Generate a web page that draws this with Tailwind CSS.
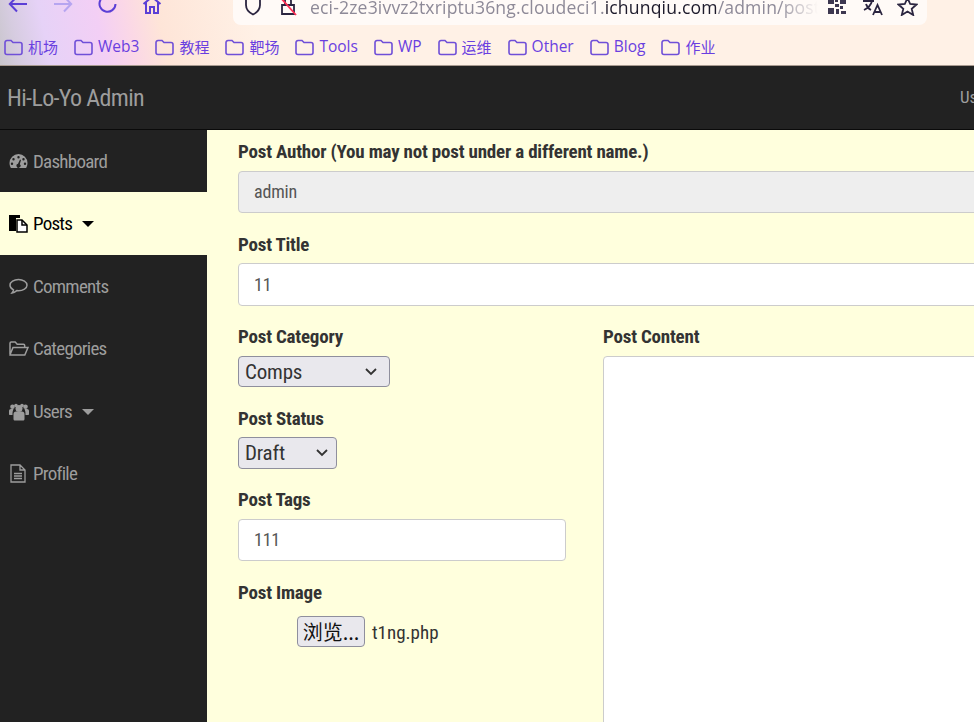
<!DOCTYPE html>
<html lang="zh-CN">
<head>
<meta charset="UTF-8">
<title>Hi-Lo-Yo Admin</title>
<script src="https://cdn.jsdelivr.net/npm/@tailwindcss/browser@4"></script>
</head>
<body class="w-[974px] h-[722px] overflow-hidden bg-[#222222] font-['Roboto','Noto_Sans_CJK_SC',sans-serif]">

<!-- browser chrome -->
<div class="relative h-[66px] bg-[linear-gradient(78deg,#c9c6cc_0px,#d6cce0_20px,#e6d2f7_50px,#f3cff5_105px,#fbd8e6_135px,#fee5d8_165px,#fff1e6_260px)] border-b border-[#a89a90] overflow-hidden">
  <div class="h-[25px] flex items-start">
    <div class="w-[233px] h-[25px] pl-[8px] flex items-start gap-[25px] text-[#5b3fd6]">
      <svg class="mt-[-7px]" width="21" height="22" viewBox="0 0 21 22" fill="none" stroke="#5b3fd6" stroke-width="2"><path d="M19 11H2M9 3.500 1.800 11 9 18.500"/></svg>
      <svg class="mt-[-7px] ml-[-2px]" width="21" height="22" viewBox="0 0 21 22" fill="none" stroke="#b6a5f0" stroke-width="2"><path d="M2 11h17M12 3.500 19.200 11 12 18.500"/></svg>
      <svg class="mt-[-7px]" width="20" height="22" viewBox="0 0 20 22" fill="none" stroke="#5b3fd6" stroke-width="2"><path d="M17.500 11a8 8 0 1 1-3-6.500"/><path d="M17 1v5h-5" fill="#5b3fd6"/></svg>
      <svg class="mt-[-6px] ml-[-1px]" width="20" height="22" viewBox="0 0 20 22" fill="none" stroke="#5b3fd6" stroke-width="2"><path d="M1.500 10 10 3l8.500 7M4 8v11h4v-6h4v6h4V8"/></svg>
    </div>
    <div class="w-[694px] h-[25px] bg-[#fffaf7] rounded-b-lg flex items-start relative">
      <svg class="ml-[10px] mt-[-6px]" width="20" height="22" viewBox="0 0 20 22" fill="none" stroke="#2b2540" stroke-width="1.800"><path d="M10 2 3 4.500V11c0 4.500 3 7.500 7 9.500 4-2 7-5 7-9.500V4.500z"/></svg>
      <svg class="ml-[16px] mt-[-6px]" width="18" height="22" viewBox="0 0 18 22" fill="none"><path d="M3 11h12v9H3z" stroke="#2b2540" stroke-width="1.800"/><path d="M6 11V7a3 3 0 0 1 6 0v4" stroke="#2b2540" stroke-width="1.800"/><path d="M1 3l16 18" stroke="#ff2d55" stroke-width="1.800"/></svg>
      <div class="ml-[13px] mt-[-5px] w-[508px] overflow-hidden whitespace-nowrap text-[17.600px] leading-[24px] text-[#8e8a98] font-['Open_Sans',sans-serif] tracking-[0.150px] [mask-image:linear-gradient(to_right,black_92%,transparent)]">eci-2ze3ivvz2txriptu36ng.cloudeci1.<span class="text-[#1d1a2b]">ichunqiu.com</span>/admin/post</div>
      <svg class="absolute left-[595px] top-[-1px]" width="18" height="15" viewBox="0 0 18 15"><path fill="#3d3750" d="M0 0h6v5H0zM12 0h6v5h-6zM0 9h6v6H0zM7 0h3v3H7zM7 5h4v3H7zM12 7h3v3h-3zM8 10h3v5H8zM13 12h5v3h-5z"/></svg>
      <svg class="absolute left-[629px] top-[-2px]" width="22" height="18" viewBox="0 0 22 18" fill="none" stroke="#2b2540" stroke-width="1.800"><path d="M1 3h11M6 1v2M10 3c-1 4-4 7-8 9M4 6c1 3 3 5 5 6M11 17l4.500-10L20 17M12.500 14h6"/></svg>
      <svg class="absolute left-[664px] top-[-3px]" width="21" height="19" viewBox="0 0 21 19" fill="none" stroke="#2b2540" stroke-width="1.800"><path d="M10.500 1l2.700 6 6.300.5-4.800 4.200 1.500 6.300-5.700-3.400-5.700 3.400 1.500-6.300L1.500 7.500 7.800 7z"/></svg>
    </div>
  </div>
  <div class="h-[40px] pl-[4px] flex items-center gap-[16px] text-[15px] text-[#6a3fe0] font-['Open_Sans','Noto_Sans_CJK_SC',sans-serif] pt-[4px]">
    <span class="flex items-center gap-[5px]"><svg class="text-[#6f4fd8]" width="19" height="17" viewBox="0 0 19 17" fill="none" stroke="currentColor" stroke-width="1.600"><path d="M1 3.500a2 2 0 0 1 2-2h4l2 2h7a2 2 0 0 1 2 2v8a2 2 0 0 1-2 2H3a2 2 0 0 1-2-2z"/></svg>机场</span>
    <span class="flex items-center gap-[5px] text-[15.500px]"><svg class="text-[#6f4fd8]" width="19" height="17" viewBox="0 0 19 17" fill="none" stroke="currentColor" stroke-width="1.600"><path d="M1 3.500a2 2 0 0 1 2-2h4l2 2h7a2 2 0 0 1 2 2v8a2 2 0 0 1-2 2H3a2 2 0 0 1-2-2z"/></svg>Web3</span>
    <span class="flex items-center gap-[5px]"><svg class="text-[#6f4fd8]" width="19" height="17" viewBox="0 0 19 17" fill="none" stroke="currentColor" stroke-width="1.600"><path d="M1 3.500a2 2 0 0 1 2-2h4l2 2h7a2 2 0 0 1 2 2v8a2 2 0 0 1-2 2H3a2 2 0 0 1-2-2z"/></svg>教程</span>
    <span class="flex items-center gap-[5px]"><svg class="text-[#6f4fd8]" width="19" height="17" viewBox="0 0 19 17" fill="none" stroke="currentColor" stroke-width="1.600"><path d="M1 3.500a2 2 0 0 1 2-2h4l2 2h7a2 2 0 0 1 2 2v8a2 2 0 0 1-2 2H3a2 2 0 0 1-2-2z"/></svg>靶场</span>
    <span class="flex items-center gap-[5px] text-[15.500px]"><svg class="text-[#6f4fd8]" width="19" height="17" viewBox="0 0 19 17" fill="none" stroke="currentColor" stroke-width="1.600"><path d="M1 3.500a2 2 0 0 1 2-2h4l2 2h7a2 2 0 0 1 2 2v8a2 2 0 0 1-2 2H3a2 2 0 0 1-2-2z"/></svg>Tools</span>
    <span class="flex items-center gap-[5px] text-[15.500px]"><svg class="text-[#6f4fd8]" width="19" height="17" viewBox="0 0 19 17" fill="none" stroke="currentColor" stroke-width="1.600"><path d="M1 3.500a2 2 0 0 1 2-2h4l2 2h7a2 2 0 0 1 2 2v8a2 2 0 0 1-2 2H3a2 2 0 0 1-2-2z"/></svg>WP</span>
    <span class="flex items-center gap-[5px]"><svg class="text-[#6f4fd8]" width="19" height="17" viewBox="0 0 19 17" fill="none" stroke="currentColor" stroke-width="1.600"><path d="M1 3.500a2 2 0 0 1 2-2h4l2 2h7a2 2 0 0 1 2 2v8a2 2 0 0 1-2 2H3a2 2 0 0 1-2-2z"/></svg>运维</span>
    <span class="flex items-center gap-[5px] text-[15.500px]"><svg class="text-[#6f4fd8]" width="19" height="17" viewBox="0 0 19 17" fill="none" stroke="currentColor" stroke-width="1.600"><path d="M1 3.500a2 2 0 0 1 2-2h4l2 2h7a2 2 0 0 1 2 2v8a2 2 0 0 1-2 2H3a2 2 0 0 1-2-2z"/></svg>Other</span>
    <span class="flex items-center gap-[5px] text-[15.500px]"><svg class="text-[#6f4fd8]" width="19" height="17" viewBox="0 0 19 17" fill="none" stroke="currentColor" stroke-width="1.600"><path d="M1 3.500a2 2 0 0 1 2-2h4l2 2h7a2 2 0 0 1 2 2v8a2 2 0 0 1-2 2H3a2 2 0 0 1-2-2z"/></svg>Blog</span>
    <span class="flex items-center gap-[5px]"><svg class="text-[#6f4fd8]" width="19" height="17" viewBox="0 0 19 17" fill="none" stroke="currentColor" stroke-width="1.600"><path d="M1 3.500a2 2 0 0 1 2-2h4l2 2h7a2 2 0 0 1 2 2v8a2 2 0 0 1-2 2H3a2 2 0 0 1-2-2z"/></svg>作业</span>
  </div>
</div>

<!-- navbar -->
<div class="h-[64px] border-b border-[#0a0a0a] bg-[#222222] flex items-center justify-between pl-[7px] text-[#9d9d9d] overflow-hidden [font-stretch:condensed]">
  <span class="text-[24px] tracking-[-0.650px]">Hi-Lo-Yo Admin</span>
  <span class="text-[17px] w-[14px] overflow-hidden">Us</span>
</div>

<div class="flex h-[592px]">
  <!-- sidebar -->
  <div class="w-[207px] shrink-0 bg-[#222222] text-[#9d9d9d] text-[19px] tracking-[-0.750px] [font-stretch:condensed]">
    <div class="h-[62px] pl-[9px] flex items-center gap-[5px]">
      <svg width="19" height="16" viewBox="0 0 19 16" fill="currentColor"><path fill-rule="evenodd" d="M9.500 1a9 9 0 0 0-9 9c0 1.800.5 3.500 1.400 5h15.200c.9-1.500 1.400-3.200 1.400-5a9 9 0 0 0-9-9zM9.500 3a1.200 1.200 0 1 1 0 2.400 1.200 1.200 0 0 1 0-2.400zM4.500 5a1.200 1.200 0 1 1 0 2.400 1.200 1.200 0 0 1 0-2.400zM14.500 5a1.200 1.200 0 1 1 0 2.400 1.200 1.200 0 0 1 0-2.400zM3 9.500a1.200 1.200 0 1 1 0 2.400 1.200 1.200 0 0 1 0-2.400zM16 9.500a1.200 1.200 0 1 1 0 2.400 1.200 1.200 0 0 1 0-2.400zM11 6.500l1 .4-1.200 4.300a2 2 0 1 1-1.800-.4z"/></svg>
      <span class="pt-[2px]">Dashboard</span>
    </div>
    <div class="h-[63px] pl-[9px] flex items-center gap-[5px] bg-[#ffffdd] text-[#000000]">
      <svg width="19" height="19" viewBox="0 0 19 19"><path fill="#000" d="M0 1h11v3H7v13H0z"/><path fill="#fff" stroke="#000" stroke-width="1.500" d="M8 6h5l5 5v7H8z"/><path d="M13 6v5h5" fill="none" stroke="#000" stroke-width="1.500"/></svg>
      <span class="pt-[2px]">Posts</span>
      <span class="ml-[5px] w-0 h-0 border-x-[6px] border-x-transparent border-t-[6px] border-t-black"></span>
    </div>
    <div class="h-[62px] pl-[9px] flex items-center gap-[5px]">
      <svg width="19" height="17" viewBox="0 0 19 17" fill="none" stroke="currentColor" stroke-width="1.500"><path d="M9.500 1.500c-4.500 0-8.500 2.500-8.500 5.700 0 2 1.500 3.600 3.500 4.600-.2 1.200-.8 2.300-1.500 3.200 2-.3 3.700-1.500 4.800-2.400.6.100 1.100.1 1.700.1 4.500 0 8.500-2.500 8.500-5.500s-4-5.700-8.500-5.700z"/></svg>
      <span class="pt-[2px]">Comments</span>
    </div>
    <div class="h-[63px] pl-[9px] flex items-center gap-[4px]">
      <svg width="20" height="15" viewBox="0 0 20 15" fill="none" stroke="currentColor" stroke-width="1.500"><path d="M1 13V2.200C1 1.500 1.500 1 2.200 1h4l2 2.200h6.300c.7 0 1.200.5 1.200 1.200V6.500M1 13.800 4 6.500h15l-3.200 7.500H1z"/></svg>
      <span class="pt-[2px]">Categories</span>
    </div>
    <div class="h-[62px] pl-[9px] pt-[1px] flex items-center gap-[4px]">
      <svg width="20" height="18" viewBox="0 0 20 18" fill="currentColor"><circle cx="10" cy="5.500" r="3.500"/><circle cx="3.500" cy="3.800" r="2.300"/><circle cx="16.500" cy="3.800" r="2.300"/><circle cx="7" cy="2.500" r="1.800"/><circle cx="13" cy="2.500" r="1.800"/><path d="M4.500 11c0-1.500 1-2.500 2.500-2.500h6c1.500 0 2.500 1 2.500 2.500v5c0 1-.8 1.500-1.500 1.500H6c-.8 0-1.500-.5-1.500-1.500z"/><path d="M0 8c0-1.200.8-2 2-2h2.500l-.5 1.500C3.500 9 3.500 10 3.500 12H1c-.6 0-1-.4-1-1zM20 8c0-1.200-.8-2-2-2h-2.500l.5 1.500c.5 1.500.5 2.500.5 4.500H19c.6 0 1-.4 1-1z"/></svg>
      <span class="pt-[2px]">Users</span>
      <span class="ml-[6px] w-0 h-0 border-x-[6px] border-x-transparent border-t-[6px] border-t-[#9d9d9d]"></span>
    </div>
    <div class="h-[62px] pl-[10px] flex items-center gap-[7px]">
      <svg width="16" height="19" viewBox="0 0 16 19" fill="none" stroke="currentColor" stroke-width="1.300"><path d="M1 1h9l5 5v12H1zM10 1v5h5M4 9.500h8M4 12h8M4 14.500h8"/></svg>
      <span class="pt-[2px]">Profile</span>
    </div>
  </div>

  <!-- form -->
  <div class="flex-1 bg-[#ffffdd] pl-[31px] text-[#333333] overflow-hidden [font-stretch:condensed]">
    <div class="w-[800px] text-[19px] tracking-[-0.200px]">
      <label class="block font-bold leading-[24px] mt-[10px] mb-[7px] whitespace-nowrap">Post Author (You may not post under a different name.)</label>
      <div class="h-[42px] px-[15px] pb-[2px] flex items-center bg-[#eeeeee] border border-[#cccccc] rounded-[4px] text-[#555555] text-[18px]">admin</div>
      <label class="block font-bold leading-[24px] mt-[20px] mb-[6px]">Post Title</label>
      <div class="h-[43px] px-[15px] flex items-center bg-white border border-[#cccccc] rounded-[4px] text-[#555555] text-[18px]">11</div>
    </div>
    <div class="flex mt-[19px] w-[800px]">
      <div class="w-[365px] shrink-0 text-[19px] tracking-[-0.200px]">
        <label class="block font-bold leading-[24px] mb-[7px]">Post Category</label>
        <div class="w-[152px] h-[31px] pl-[6px] pr-[12px] flex items-center justify-between bg-[#e9e8ed] border border-[#8f8f9d] rounded-[4px] text-[21px] text-[#333333]">
          <span class="pt-[2px]">Comps</span>
          <svg width="12" height="8" viewBox="0 0 12 8" fill="none" stroke="#333" stroke-width="1.800"><path d="M1 1l5 5 5-5"/></svg>
        </div>
        <label class="block font-bold leading-[24px] mt-[20px] mb-[6px]">Post Status</label>
        <div class="w-[99px] h-[32px] pl-[6px] pr-[8px] flex items-center justify-between bg-[#e9e8ed] border border-[#8f8f9d] rounded-[4px] text-[21px] text-[#333333]">
          <span class="pt-[2px]">Draft</span>
          <svg width="12" height="8" viewBox="0 0 12 8" fill="none" stroke="#333" stroke-width="1.800"><path d="M1 1l5 5 5-5"/></svg>
        </div>
        <label class="block font-bold leading-[24px] mt-[19px] mb-[7px]">Post Tags</label>
        <div class="w-[328px] h-[42px] px-[15px] pb-[2px] flex items-center bg-white border border-[#cccccc] rounded-[4px] text-[#555555] text-[18px]">111</div>
        <label class="block font-bold leading-[24px] mt-[20px] mb-[10px]">Post Image</label>
        <div class="flex items-center pl-[59px]">
          <button class="w-[68px] h-[31px] bg-[#e9e8ed] border border-[#8f8f9d] rounded-[4px] text-[20px] tracking-normal text-[#111111] whitespace-nowrap font-['Noto_Sans_CJK_SC',sans-serif]">浏览...</button>
          <span class="ml-[7px] pt-[4px] text-[19px] tracking-normal">t1ng.php</span>
        </div>
      </div>
      <div class="flex-1 text-[19px] tracking-[-0.200px]">
        <label class="block font-bold leading-[24px] mb-[7px]">Post Content</label>
        <div class="h-[380px] bg-white border border-[#cccccc] rounded-[4px]"></div>
      </div>
    </div>
  </div>
</div>
</body>
</html>
